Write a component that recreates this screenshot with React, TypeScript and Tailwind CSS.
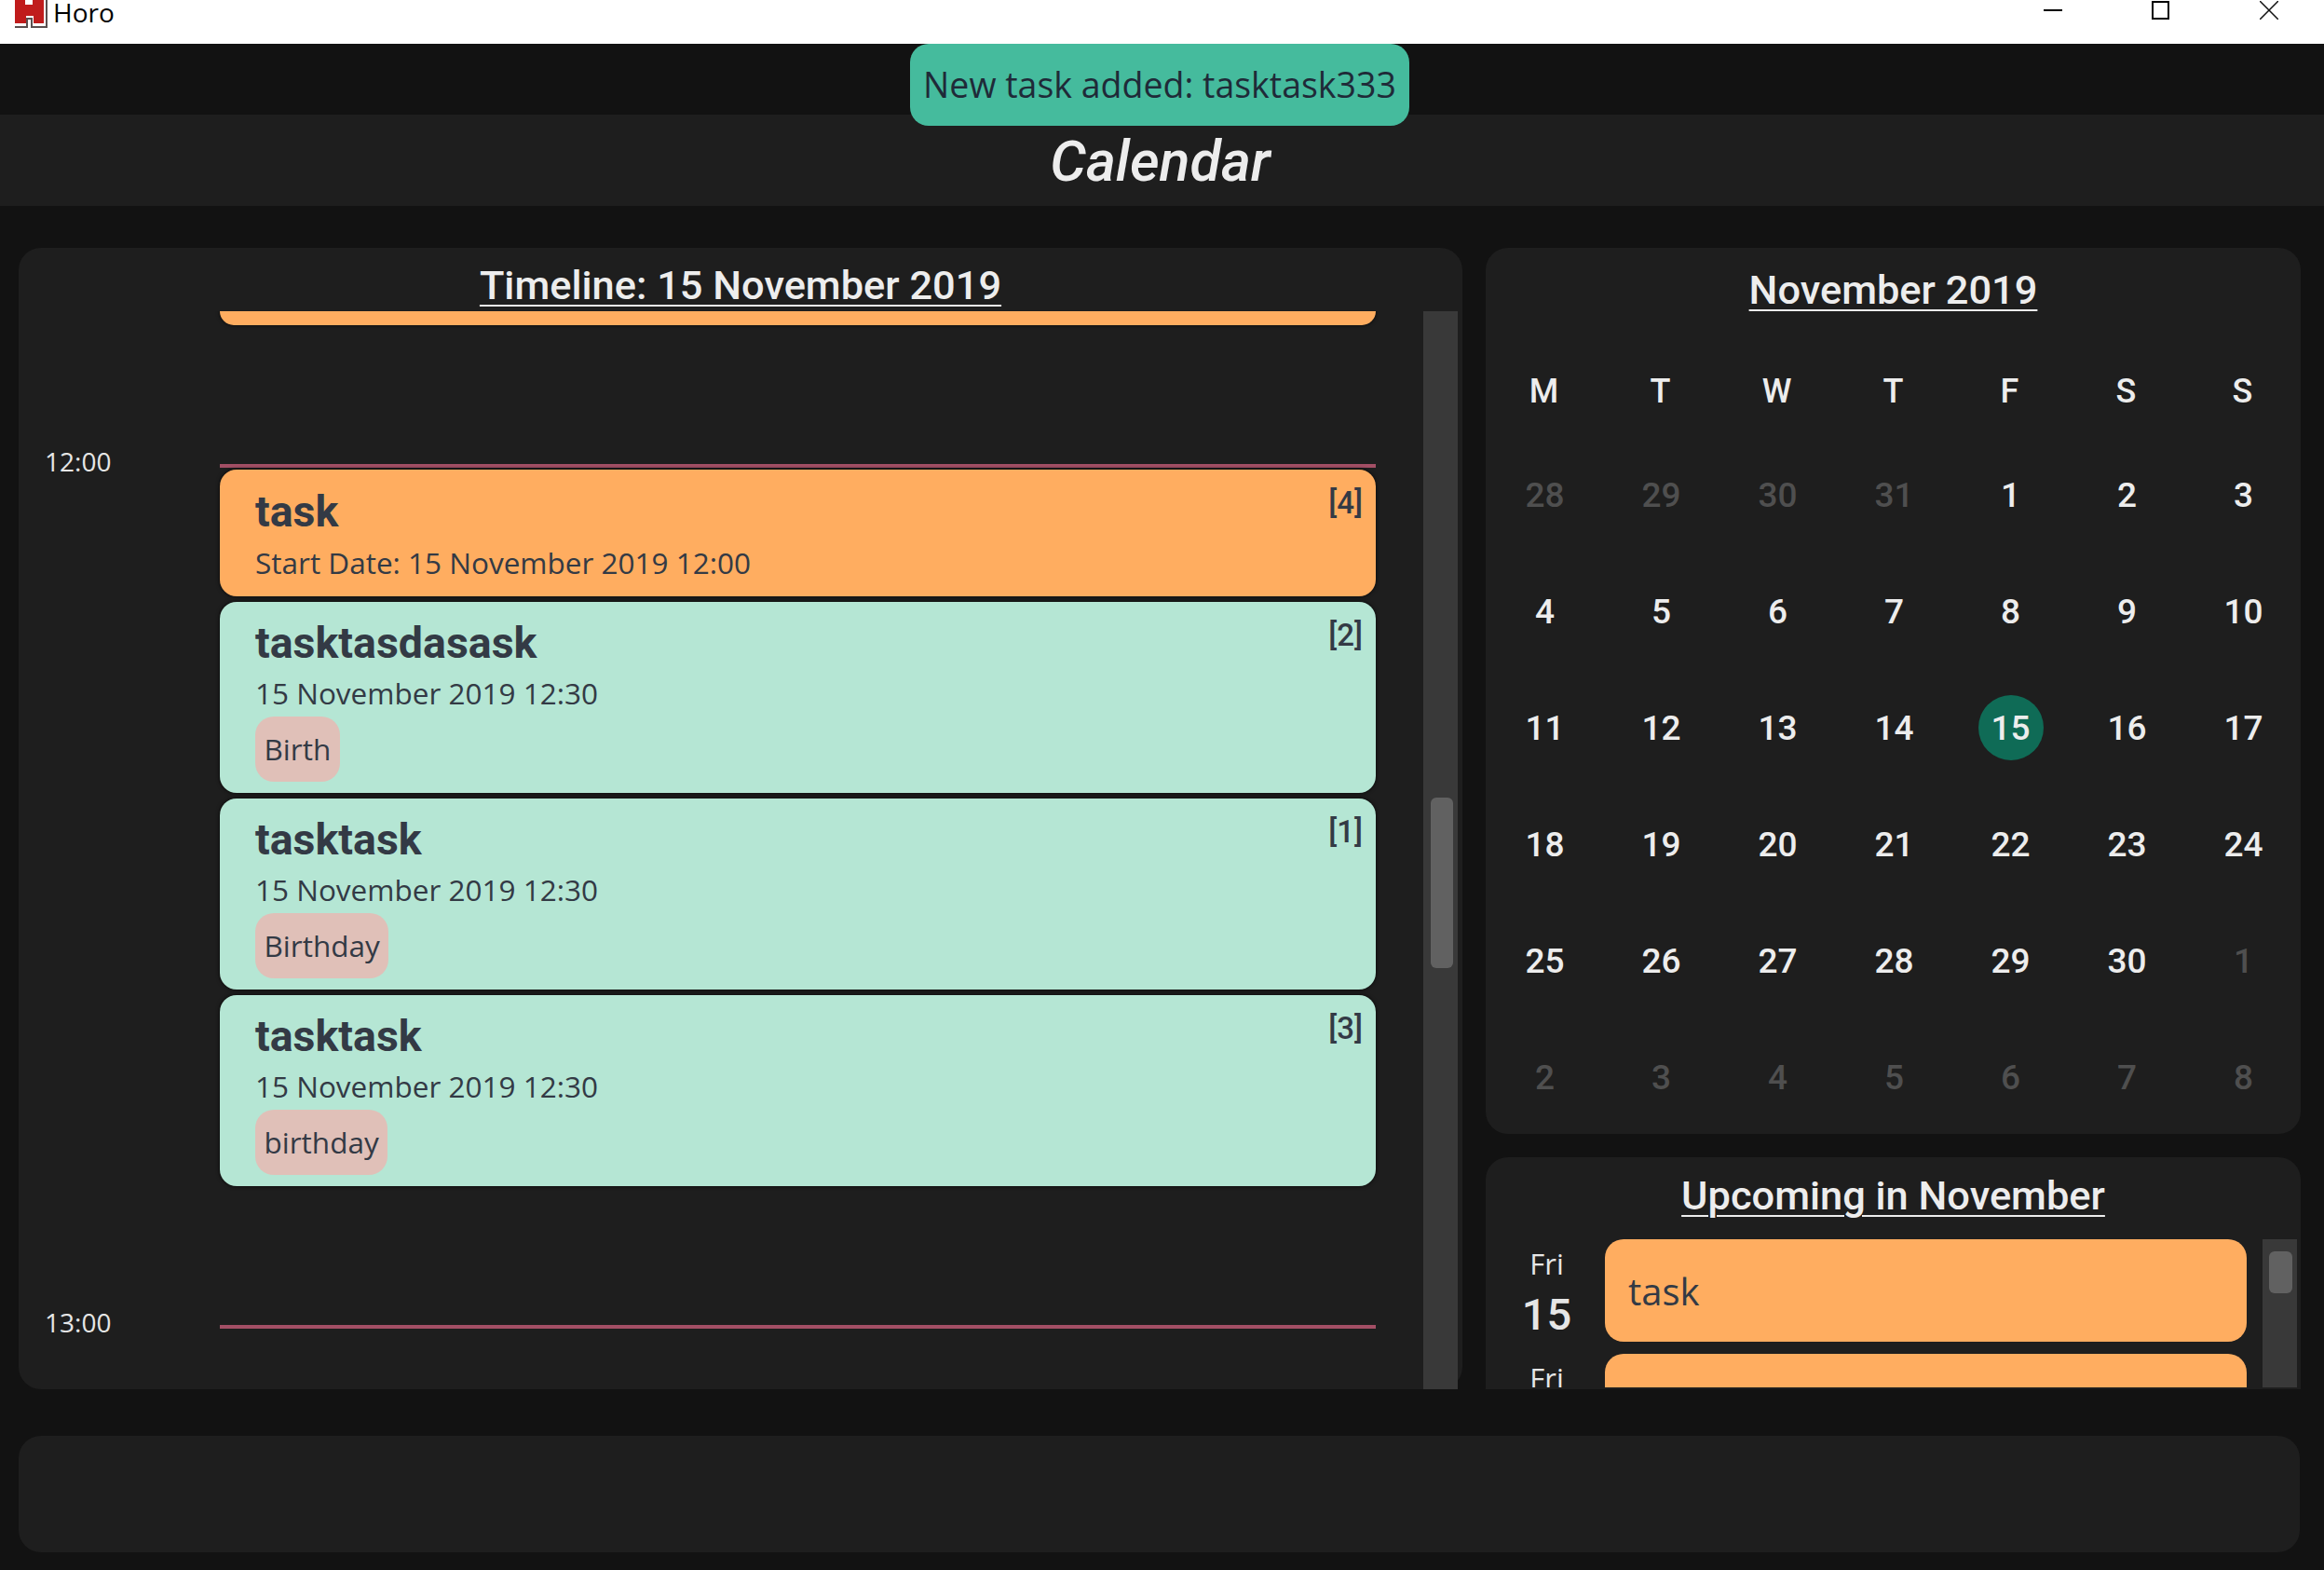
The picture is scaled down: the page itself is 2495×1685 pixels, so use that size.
// Horo - calendar view

const CELLS = [
  [28, 29, 30, 31, 1, 2, 3],
  [4, 5, 6, 7, 8, 9, 10],
  [11, 12, 13, 14, 15, 16, 17],
  [18, 19, 20, 21, 22, 23, 24],
  [25, 26, 27, 28, 29, 30, 1],
  [2, 3, 4, 5, 6, 7, 8],
];

function isOutside(week: number, day: number) {
  return (week === 0 && day < 4) || (week === 4 && day === 6) || week === 5;
}

function HourLine({ label }: { label: string }) {
  return (
    <div className="flex h-[4px] items-center">
      <div className="w-[216px] shrink-0 -mt-[11px] pl-[28px] text-[28px] leading-[40px] text-[#e6e6e6] font-['Open_Sans',sans-serif]">
        {label}
      </div>
      <div className="h-[4px] w-[1241px] bg-[#a34f65]" />
    </div>
  );
}

function TaskCard({
  title,
  date,
  tag,
  index,
  orange,
}: {
  title: string;
  date: string;
  tag?: string;
  index: number;
  orange?: boolean;
}) {
  return (
    <div
      className={
        orange
          ? "relative h-[136px] rounded-[18px] bg-[#ffad60] pl-[38px] pt-[17px] text-[#333a45] shadow-[0_0_4px_rgba(0,0,0,0.8)]"
          : "relative h-[205px] rounded-[18px] bg-[#b5e6d4] pl-[38px] pt-[16px] text-[#333a45] shadow-[0_0_4px_rgba(0,0,0,0.8)]"
      }
    >
      <div className="font-['Roboto',sans-serif] text-[46.5px] font-bold leading-[56px]">{title}</div>
      <div
        className={
          orange
            ? "mt-[3px] font-['Open_Sans',sans-serif] text-[31.5px] leading-[48px]"
            : "mt-[2px] mb-[1px] font-['Open_Sans',sans-serif] text-[31.5px] leading-[48px]"
        }
      >
        {date}
      </div>
      {tag && (
        <div className="flex h-[70px] w-fit items-center rounded-[20px] bg-[#e0c0b8] px-[9.5px] font-['Open_Sans',sans-serif] text-[31.5px]">
          {tag}
        </div>
      )}
      <div className="absolute right-[14px] top-[14px] font-['Roboto',sans-serif] text-[33px] font-medium leading-[44px]">
        [{index}]
      </div>
    </div>
  );
}

function Timeline() {
  return (
    <div className="flex h-[1225px] w-[1550px] shrink-0 flex-col rounded-[24px] bg-[#1e1e1e]">
      <div className="flex h-[68px] shrink-0 justify-center">
        <h2 className="pt-[16px] font-['Roboto',sans-serif] text-[43.4px] font-medium leading-[50px] text-[#ededed] underline decoration-2 underline-offset-[6px]">
          Timeline: 15 November 2019
        </h2>
      </div>
      <div className="flex min-h-0 flex-1">
        <div className="min-w-0 flex-1 overflow-hidden">
          <div className="ml-[216px] h-[15px] w-[1241px] rounded-b-[18px] bg-[#ffad60] shadow-[0_0_4px_rgba(0,0,0,0.8)]" />
          <div className="mt-[149px]">
            <HourLine label="12:00" />
          </div>
          <div className="ml-[216px] mt-[2px] flex w-[1241px] flex-col gap-[6px]">
            <TaskCard orange title="task" date="Start Date: 15 November 2019 12:00" index={4} />
            <TaskCard title="tasktasdasask" date="15 November 2019 12:30" tag="Birth" index={2} />
            <TaskCard title="tasktask" date="15 November 2019 12:30" tag="Birthday" index={1} />
            <TaskCard title="tasktask" date="15 November 2019 12:30" tag="birthday" index={3} />
          </div>
          <div className="mt-[149px]">
            <HourLine label="13:00" />
          </div>
        </div>
        <div className="mr-[5px] w-[37px] shrink-0 bg-[#393939] pl-[8px] pt-[522px]">
          <div className="h-[183px] w-[24px] rounded-[6px] bg-[#616161]" />
        </div>
      </div>
    </div>
  );
}

function MonthPanel() {
  return (
    <div className="h-[951px] shrink-0 rounded-[24px] bg-[#1e1e1e]">
      <h2 className="pt-[21px] text-center font-['Roboto',sans-serif] text-[43.4px] font-medium leading-[50px] text-[#ededed] underline decoration-2 underline-offset-[6px]">
        November 2019
      </h2>
      <div className="mt-[55px] grid grid-cols-[repeat(7,125px)] font-['Roboto',sans-serif] text-[36px] font-medium text-[#ededed]">
        {["M", "T", "W", "T", "F", "S", "S"].map((d, i) => (
          <div key={i} className="flex h-[56px] items-center justify-center">
            {d}
          </div>
        ))}
      </div>
      <div className="ml-[1px] mt-[20px] grid grid-cols-[repeat(7,125px)] font-['Roboto',sans-serif] text-[37px] font-medium">
        {CELLS.map((week, w) =>
          week.map((day, d) => (
            <div key={`${w}-${d}`} className="flex h-[125px] items-center justify-center">
              <div
                className={
                  day === 15 && w === 2
                    ? "flex h-[70px] w-[70px] items-center justify-center rounded-full bg-[#0f6b56] pt-[2px] text-[#ededed]"
                    : isOutside(w, d)
                      ? "pt-[2px] text-[#4f4f4f]"
                      : "pt-[2px] text-[#ededed]"
                }
              >
                {day}
              </div>
            </div>
          )),
        )}
      </div>
    </div>
  );
}

function UpcomingPanel() {
  return (
    <div className="flex min-h-0 flex-1 flex-col overflow-hidden rounded-t-[24px] bg-[#1e1e1e]">
      <h2 className="h-[88px] shrink-0 pt-[17px] text-center font-['Roboto',sans-serif] text-[43.4px] font-medium leading-[50px] text-[#ededed] underline decoration-2 underline-offset-[6px]">
        Upcoming in November
      </h2>
      <div className="flex h-[159px] shrink-0">
        <div className="min-w-0 flex-1 overflow-hidden">
          {[0, 1].map((i) => (
            <div key={i} className="mb-[13px] flex h-[110px]">
              <div className="w-[128px] shrink-0 pl-[3px] pt-[4px] text-center text-[#e6e6e6]">
                <div className="font-['Open_Sans',sans-serif] text-[31px] leading-[44px]">Fri</div>
                <div className="font-['Roboto',sans-serif] text-[47px] font-medium leading-[66px]">15</div>
              </div>
              <div className="flex h-[110px] w-[689px] items-center rounded-[20px] bg-[#ffad60] pl-[25px] pt-[2px] font-['Open_Sans',sans-serif] text-[40px] text-[#333a45]">
                {i === 0 ? "task" : ""}
              </div>
            </div>
          ))}
        </div>
        <div className="mr-[4px] w-[37px] shrink-0 bg-[#393939] pl-[7px] pt-[13px]">
          <div className="h-[45px] w-[25px] rounded-[6px] bg-[#616161]" />
        </div>
      </div>
    </div>
  );
}

export default function App() {
  return (
    <div className="flex h-[1685px] w-[2495px] flex-col overflow-hidden bg-[#121212]">
      {/* window title bar */}
      <div className="flex h-[47px] shrink-0 items-start bg-white">
        <svg className="ml-[15px] h-[31px] w-[36px]" viewBox="0 0 36 31">
          <path d="M1 0H32V25H21V17H13V25H1Z" fill="#c01c1c" />
          <path d="M12 0H20V5H12Z" fill="#fff" />
          <path d="M1 29H14V20H19V29H35V0" fill="none" stroke="#5a5050" strokeWidth="2" />
        </svg>
        <span className="ml-[6px] font-['Open_Sans',sans-serif] text-[28px] leading-[26px] text-black">Horo</span>
        <div className="ml-auto flex">
          <div className="mr-[96px] mt-[10px] h-[2px] w-[20px] bg-black" />
          <div className="mr-[97px] mt-[1px] h-[20px] w-[19px] border-2 border-black" />
          <svg className="mr-[49px] mt-[1px] h-[20px] w-[20px]" viewBox="0 0 20 20">
            <path d="M0 0L20 20M20 0L0 20" stroke="#111" strokeWidth="1.5" />
          </svg>
        </div>
      </div>

      {/* toast + page heading */}
      <div className="relative h-[174px] shrink-0">
        <div className="h-[76px]" />
        <div className="flex h-[98px] items-center justify-center bg-[#1e1e1e] pt-[4px]">
          <h1 className="-ml-[4px] font-['Roboto',sans-serif] text-[61px] font-medium italic text-[#ededed]">Calendar</h1>
        </div>
        <div className="absolute left-[977px] top-0 flex h-[88px] w-[536px] items-center justify-center whitespace-nowrap rounded-[20px] bg-[#45bb9d] font-['Open_Sans',sans-serif] text-[37.5px] text-[#1f2a38]">
          New task added: tasktask333
        </div>
      </div>

      <div className="mt-[45px] flex h-[1225px] shrink-0 px-[20px]">
        <Timeline />
        <div className="ml-[25px] flex w-[875px] shrink-0 flex-col gap-[25px]">
          <MonthPanel />
          <UpcomingPanel />
        </div>
      </div>

      <div className="mx-[20px] mt-[50px] h-[125px] w-[2449px] rounded-[24px] bg-[#1e1e1e]" />
    </div>
  );
}
